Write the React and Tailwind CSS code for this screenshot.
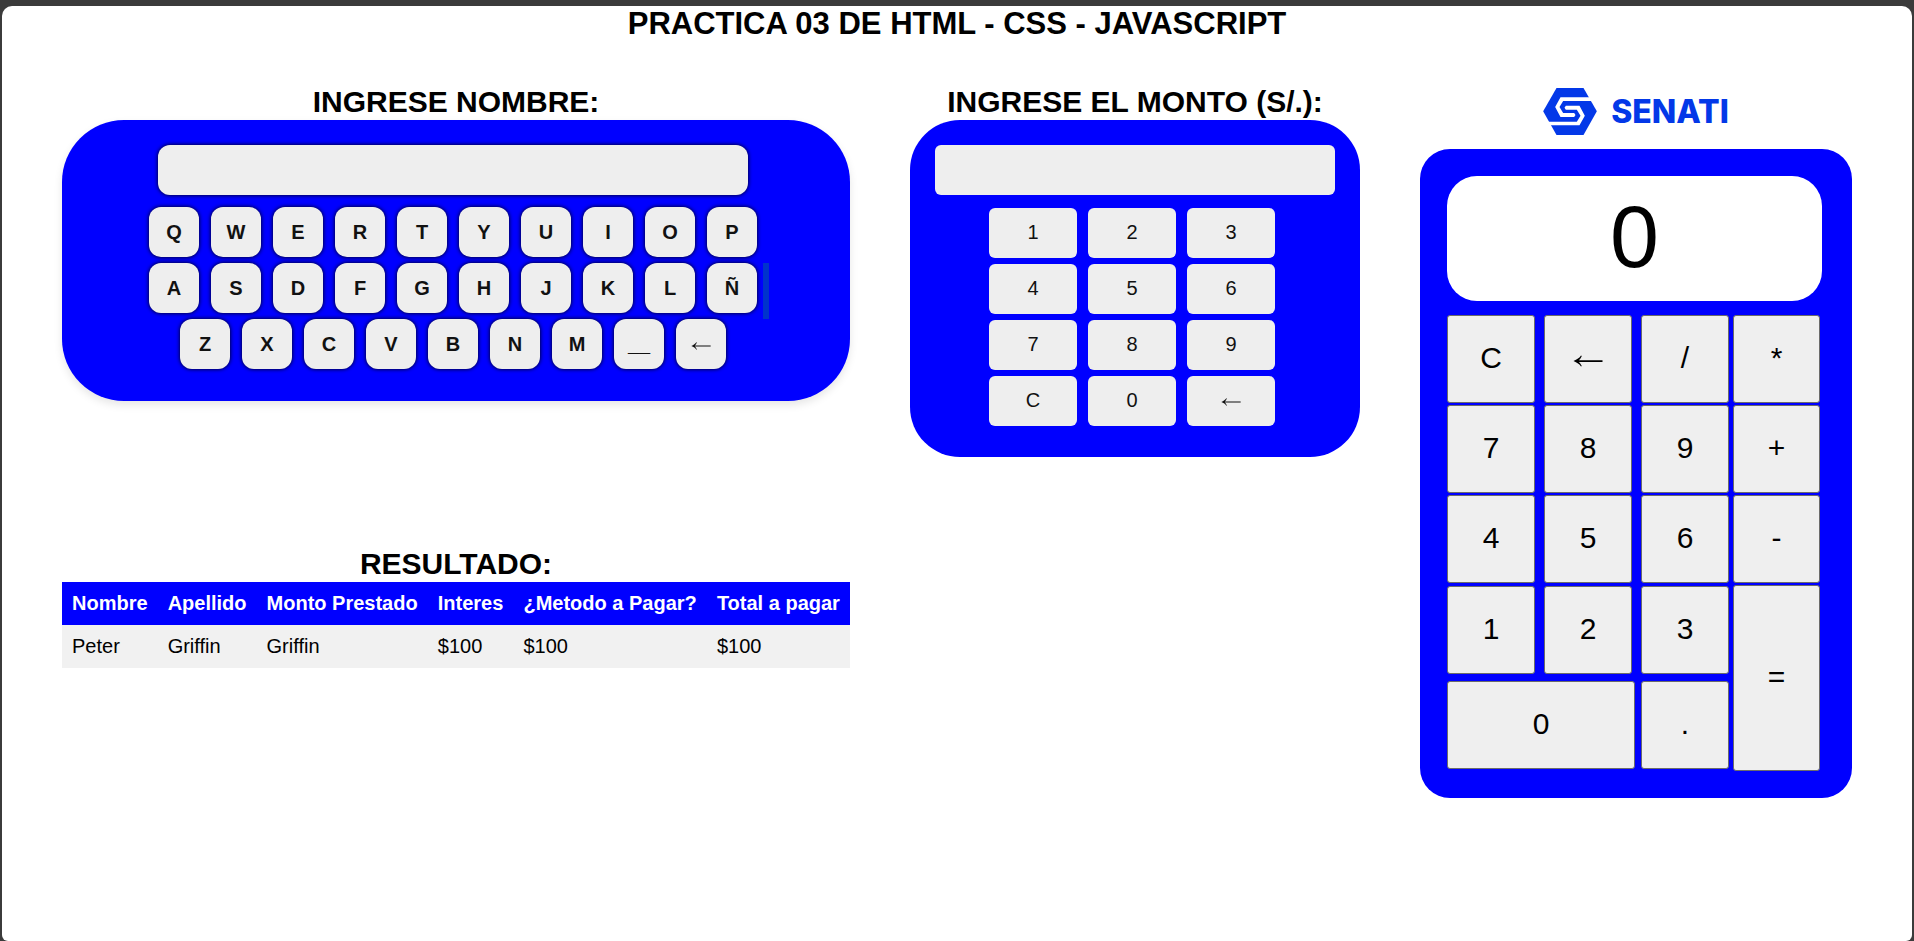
import { useState } from "react";

const LETTER_ROWS = [
  ["Q", "W", "E", "R", "T", "Y", "U", "I", "O", "P"],
  ["A", "S", "D", "F", "G", "H", "J", "K", "L", "Ñ"],
  ["Z", "X", "C", "V", "B", "N", "M", "__", "←"],
];

const AMOUNT_KEYS = ["1", "2", "3", "4", "5", "6", "7", "8", "9", "C", "0", "←"];

const CALC_TOP_KEYS = ["C", "←", "/", "7", "8", "9", "4", "5", "6"];
const CALC_LOW_KEYS = ["1", "2", "3"];
const CALC_OPERATORS = ["*", "+", "-"];

const COLUMNS = [
  "Nombre",
  "Apellido",
  "Monto Prestado",
  "Interes",
  "¿Metodo a Pagar?",
  "Total a pagar",
];
const ROWS = [["Peter", "Griffin", "Griffin", "$100", "$100", "$100"]];

const NAMES = { "←": "Borrar", __: "Espacio" };

function KeyLabel({ text }) {
  if (text !== "←") return text;
  return (
    <svg viewBox="0 0 30 18" className="mx-auto w-[1em]" aria-hidden="true">
      <path
        fill="currentColor"
        d="M0.5 12C4 10.6 6.5 8.8 8 6.5L8.8 6.9C8 8.8 7 10.2 5.8 11.2H29.5V12.9H5.8C7 13.9 8 15.2 8.8 17.1L8 17.5C6.5 15.2 4 13.4 0.5 12Z"
      />
    </svg>
  );
}

function Heading({ children }) {
  return (
    <h2 className="pb-[2px] text-center text-[30px] leading-[32px] font-bold whitespace-nowrap">
      {children}
    </h2>
  );
}

function Keyboard({ value, onChange }) {
  const press = (key) => {
    if (key === "←") onChange(value.slice(0, -1));
    else onChange(value + (key === "__" ? " " : key));
  };
  return (
    <section>
      <Heading>
        <label htmlFor="nombre">INGRESE NOMBRE:</label>
      </Heading>
      <div className="flex flex-col items-center rounded-[62px] bg-[#0000ff] pt-[25px] pr-[6px] pb-[32px] shadow-[0_4px_8px_rgba(0,0,0,0.1)]">
        <input
          id="nombre"
          type="text"
          value={value}
          onChange={(e) => onChange(e.target.value)}
          className="mb-3 h-[50px] w-[590px] max-w-full rounded-[12px] bg-[#eeeeee] px-4 text-[20px] shadow-[0_0_4px_rgba(0,0,0,1)] outline-none"
        />
        <div className="flex flex-col items-center gap-[6px]">
          {LETTER_ROWS.map((row, i) => (
            <div key={i} className="relative flex gap-3">
              {row.map((key) => (
                <button
                  key={key}
                  type="button"
                  aria-label={NAMES[key]}
                  onClick={() => press(key)}
                  className="size-[50px] rounded-[12px] bg-[#eeeeee] text-[20px] leading-[23px] font-bold text-[#111111] shadow-[0_0_4px_rgba(0,0,0,1)]"
                >
                  <KeyLabel text={key} />
                </button>
              ))}
              {i === 1 && (
                <span className="absolute top-0 left-full ml-[6px] h-14 w-[6px] bg-[#0033cc]" />
              )}
            </div>
          ))}
        </div>
      </div>
    </section>
  );
}

function AmountPad({ value, onChange }) {
  const press = (key) => {
    if (key === "C") onChange("");
    else if (key === "←") onChange(value.slice(0, -1));
    else onChange(value + key);
  };
  return (
    <section>
      <Heading>
        <label htmlFor="monto">INGRESE EL MONTO (S/.):</label>
      </Heading>
      <div className="rounded-[50px] bg-[#0000ff] px-[25px] pt-[25px] pb-[31px]">
        <input
          id="monto"
          type="text"
          value={value}
          onChange={(e) => onChange(e.target.value)}
          className="mb-[13px] block h-[50px] w-full rounded-[6px] bg-[#eeeeee] px-4 text-[20px] outline-none"
        />
        <div className="flex justify-center pr-[6px]">
          <div className="grid grid-cols-[repeat(3,88px)] gap-x-[11px] gap-y-[6px]">
            {AMOUNT_KEYS.map((key) => (
              <button
                key={key}
                type="button"
                aria-label={NAMES[key]}
                onClick={() => press(key)}
                className="h-[50px] rounded-[6px] bg-[#eeeeee] pb-[2px] text-[20px] leading-[23px] text-[#111111]"
              >
                <KeyLabel text={key} />
              </button>
            ))}
          </div>
        </div>
      </div>
    </section>
  );
}

function Results() {
  return (
    <section>
      <Heading>RESULTADO:</Heading>
      <table className="w-full border-collapse text-left text-[20px] leading-[23px]">
        <thead>
          <tr className="bg-[#0000ff] text-white">
            {COLUMNS.map((name) => (
              <th key={name} scope="col" className="p-[10px] font-bold whitespace-nowrap">
                {name}
              </th>
            ))}
          </tr>
        </thead>
        <tbody>
          {ROWS.map((cells, r) => (
            <tr key={r} className="bg-[#f1f1f1]">
              {cells.map((cell, c) => (
                <td key={c} className="p-[10px]">
                  {cell}
                </td>
              ))}
            </tr>
          ))}
        </tbody>
      </table>
    </section>
  );
}

function Logo() {
  return (
    <div className="flex h-[63px] items-center justify-center gap-[14px] pb-[13px] text-[#0338e8]">
      <svg viewBox="0 0 161 141" className="h-[47px] w-[54px]" aria-hidden="true">
        <path fill="currentColor" d="M0 70 40 0H121L161 70 121 141H40Z" />
        <path
          fill="#ffffff"
          d="M140 28H52L36 57 52 87H93L97 81 93 75H60L49 57 60 39H147Z"
        />
        <path
          fill="#ffffff"
          d="M21 112H109L125 83 109 53H68L64 59 68 65H101L112 83 101 101H14Z"
        />
      </svg>
      <span className="pt-[2px] font-[Inter,sans-serif] text-[32px] leading-[40px] font-extrabold">
        SENATI
      </span>
    </div>
  );
}

function CalcKey({ label, onPress, className }) {
  return (
    <button
      type="button"
      aria-label={NAMES[label]}
      onClick={() => onPress(label)}
      className={`rounded-[3px] border border-[#6b6b6b] bg-[#efefef] pb-[2px] text-[30px] leading-[34px] text-black ${className}`}
    >
      <KeyLabel text={label} />
    </button>
  );
}

function Calculator() {
  const [display, setDisplay] = useState("0");
  const [stored, setStored] = useState(null);
  const [fresh, setFresh] = useState(true);

  const compute = () => {
    if (!stored) return display;
    const a = stored.value;
    const b = Number(display);
    const results = { "+": a + b, "-": a - b, "*": a * b, "/": a / b };
    return String(results[stored.operator]);
  };

  const press = (key) => {
    if (key === "C") {
      setDisplay("0");
      setStored(null);
      setFresh(true);
    } else if (key === "←") {
      setDisplay(display.slice(0, -1) || "0");
    } else if (key === "=") {
      setDisplay(compute());
      setStored(null);
      setFresh(true);
    } else if ("+-*/".includes(key)) {
      const total = compute();
      setDisplay(total);
      setStored({ value: Number(total), operator: key });
      setFresh(true);
    } else {
      setDisplay(fresh && key !== "." ? key : display + key);
      setFresh(false);
    }
  };

  return (
    <section>
      <Logo />
      <div className="rounded-[30px] bg-[#0000ff] pt-[27px] pr-[30px] pb-[27px] pl-[27px]">
        <input
          type="text"
          readOnly
          aria-label="Resultado de la calculadora"
          value={display}
          className="mb-[14px] block h-[125px] w-full rounded-[30px] bg-white px-4 pb-1 text-center text-[88px] leading-[100px] outline-none"
        />
        <div className="flex gap-1">
          <div className="flex flex-col">
            <div className="mb-[3px] grid grid-cols-[repeat(3,88px)] gap-x-[9px] gap-y-[2px]">
              {CALC_TOP_KEYS.map((key) => (
                <CalcKey key={key} label={key} onPress={press} className="h-[88px]" />
              ))}
            </div>
            <div className="mb-[7px] grid grid-cols-[repeat(3,88px)] gap-x-[9px]">
              {CALC_LOW_KEYS.map((key) => (
                <CalcKey key={key} label={key} onPress={press} className="h-[88px]" />
              ))}
            </div>
            <div className="flex justify-between">
              <CalcKey label="0" onPress={press} className="h-[88px] w-[188px]" />
              <CalcKey label="." onPress={press} className="h-[88px] w-[88px]" />
            </div>
          </div>
          <div className="flex flex-col gap-[2px]">
            {CALC_OPERATORS.map((key) => (
              <CalcKey key={key} label={key} onPress={press} className="h-[88px] w-[87px]" />
            ))}
            <CalcKey label="=" onPress={press} className="h-[186px] w-[87px]" />
          </div>
        </div>
      </div>
    </section>
  );
}

export default function App() {
  const [name, setName] = useState("");
  const [amount, setAmount] = useState("");

  return (
    <div className="flex min-h-screen flex-col bg-[#3b3b3b] px-[2px] pt-[6px] font-['Liberation_Sans',Arial,sans-serif] text-black">
      <main className="flex-1 rounded-t-[10px] rounded-b-[6px] bg-white">
        <h1 className="text-center text-[31px] leading-[36px] font-bold">
          PRACTICA 03 DE HTML - CSS - JAVASCRIPT
        </h1>
        <div className="grid grid-cols-[788fr_450fr_432fr] items-start gap-[60px] px-[60px] pt-[44px]">
          <div className="flex flex-col gap-[147px]">
            <Keyboard value={name} onChange={setName} />
            <Results />
          </div>
          <AmountPad value={amount} onChange={setAmount} />
          <Calculator />
        </div>
      </main>
    </div>
  );
}
